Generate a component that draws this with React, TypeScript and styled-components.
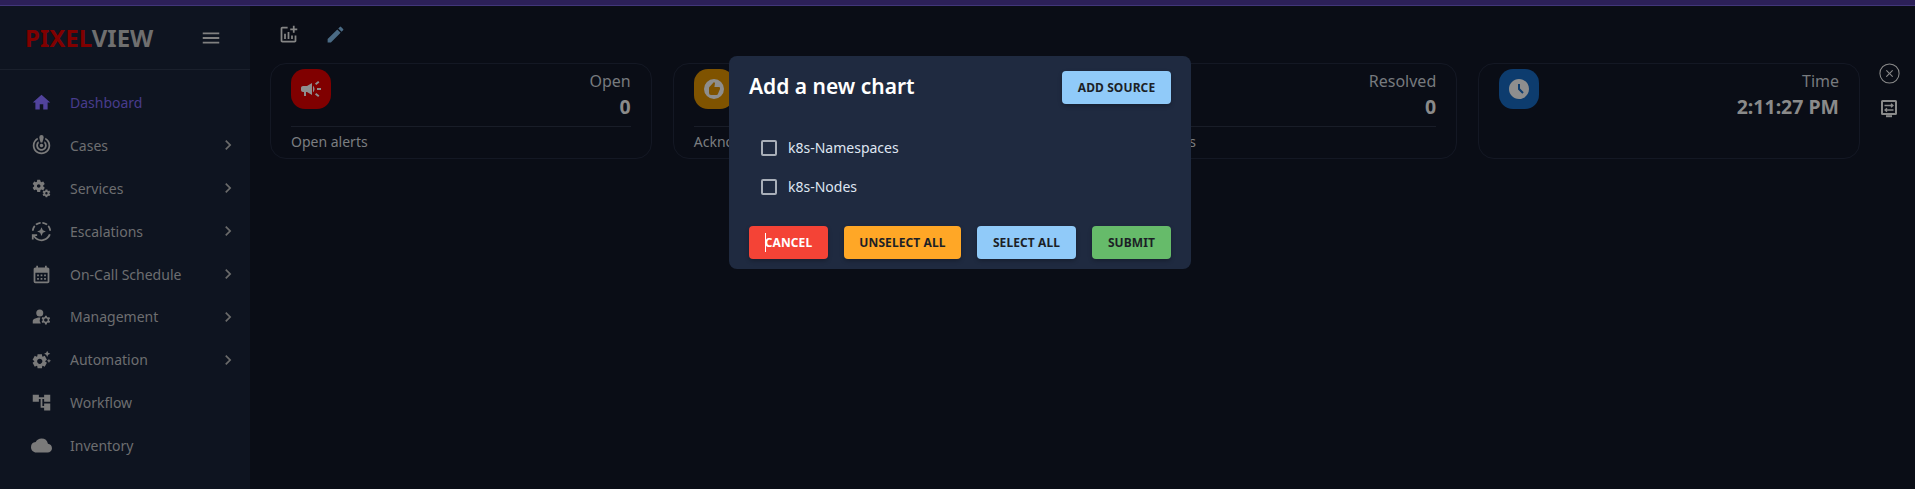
import { ReactNode } from 'react';
import styled, { createGlobalStyle } from 'styled-components';
import { CircleX } from 'lucide-react';
import {
  MdAccessTimeFilled,
  MdAccountTree,
  MdAutoMode,
  MdCalendarMonth,
  MdCampaign,
  MdCheckCircle,
  MdChevronRight,
  MdCloud,
  MdEdit,
  MdHome,
  MdManageAccounts,
  MdMenu,
  MdMiscellaneousServices,
  MdOutlineAddchart,
  MdOutlineCrisisAlert,
  MdRecommend,
  MdSettingsSuggest,
} from 'react-icons/md';

const GlobalStyle = createGlobalStyle`
  html, body {
    margin: 0;
    height: 489px;
    overflow: hidden;
    background: #0a0d16;
    font-family: "Noto Sans", sans-serif;
  }
  * { box-sizing: border-box; }
`;

const TopBar = styled.div`
  height: 6px;
  background: #2c2058;
  border-bottom: 1px solid #41367a;
`;

const Shell = styled.div`
  display: flex;
  height: 483px;
`;

const Sidebar = styled.aside`
  width: 250px;
  flex: none;
  background: #0e1420;
`;

const Brand = styled.div`
  height: 64px;
  padding: 0 28px 0 25px;
  display: flex;
  align-items: center;
  justify-content: space-between;
  border-bottom: 1px solid #1a202c;
  color: #6f6f6f;
  svg { font-size: 22px; color: #808080; }
`;

const Logo = styled.div`
  font-size: 24px;
  font-weight: 700;
  line-height: 1;
  span { color: #800000; }
`;

const NavList = styled.nav`
  padding-top: 11px;
`;

const NavRow = styled.div<{ $active?: boolean }>`
  height: 42.9px;
  padding: 0 12px 0 31px;
  display: flex;
  align-items: center;
  font-size: 14px;
  color: ${(p) => (p.$active ? '#483c8c' : '#6d6e70')};
  > svg:first-child {
    font-size: 21px;
    margin-right: 18px;
    color: ${(p) => (p.$active ? '#51439c' : '#7a7a7a')};
  }
  > span { flex: 1; }
  > svg:last-child:not(:first-child) { font-size: 20px; color: #6a6a6a; }
`;

const Main = styled.main`
  flex: 1;
  padding-left: 20px;
  min-width: 0;
`;

const Toolbar = styled.div`
  height: 57px;
  padding: 18px 0 0 8px;
  display: flex;
  gap: 26px;
  align-items: flex-start;
`;

const ToolIcon = styled.span<{ $color: string }>`
  display: flex;
  color: ${(p) => p.$color};
  font-size: 21px;
`;

const Content = styled.div`
  display: flex;
  align-items: flex-start;
`;

const CardGrid = styled.div`
  width: 1590px;
  display: grid;
  grid-template-columns: repeat(4, 1fr);
  gap: 21px;
`;

const Card = styled.section`
  height: 96px;
  padding: 5px 20px 0;
  border: 1px solid #141824;
  border-radius: 16px;
`;

const CardHead = styled.div<{ $plain?: boolean }>`
  height: 58px;
  border-bottom: 1px solid ${(p) => (p.$plain ? 'transparent' : '#191d28')};
  display: flex;
  justify-content: space-between;
`;

const Badge = styled.div<{ $bg: string }>`
  width: 40px;
  height: 40px;
  border-radius: 14px;
  background: ${(p) => p.$bg};
  color: #8e8e8e;
  display: flex;
  align-items: center;
  justify-content: center;
  font-size: 24px;
`;

const Stat = styled.div`
  text-align: right;
`;

const StatLabel = styled.div`
  font-size: 16px;
  line-height: 24px;
  color: #777a7e;
`;

const StatValue = styled.div`
  font-size: 19.5px;
  line-height: 28px;
  font-weight: 700;
  color: #8a8a8a;
`;

const CardNote = styled.div`
  font-size: 14px;
  line-height: 30px;
  color: #7b7d80;
`;

const Rail = styled.div`
  flex: 1;
  margin-top: -1px;
  padding-left: 3px;
  display: flex;
  flex-direction: column;
  align-items: center;
  gap: 13px;
  color: #8a8a8a;
`;

const RailIcon = styled.span`
  display: flex;
  font-size: 20px;
`;

const Overlay = styled.div`
  position: absolute;
  left: 729px;
  top: 56px;
`;

const Dialog = styled.div`
  width: 462px;
  height: 213px;
  padding: 15px 20px 10px;
  background: #1f2a40;
  border-radius: 8px;
  display: flex;
  flex-direction: column;
`;

const DialogHead = styled.div`
  display: flex;
  justify-content: space-between;
  align-items: center;
  height: 33px;
`;

const DialogTitle = styled.h2`
  margin: 0 0 3px;
  font-size: 21px;
  font-weight: 600;
  color: #fff;
`;

const OptionList = styled.div`
  flex: 1;
  padding: 24px 0 0 12px;
`;

const Option = styled.label`
  height: 39px;
  display: flex;
  align-items: center;
  gap: 11px;
  font-size: 14px;
  color: #dfe6f2;
`;

const CheckBox = styled.span`
  width: 16px;
  height: 16px;
  border: 2px solid #a9afb9;
  border-radius: 2px;
`;

const DialogActions = styled.div`
  display: flex;
  justify-content: space-between;
`;

const ActionButton = styled.button<{ $bg: string; $fg?: string; $w: number }>`
  position: relative;
  width: ${(p) => p.$w}px;
  height: 33px;
  padding: 0;
  border: 0;
  border-radius: 4px;
  background: ${(p) => p.$bg};
  color: ${(p) => p.$fg ?? '#1c1f26'};
  font-family: inherit;
  font-size: 12px;
  font-weight: 700;
  letter-spacing: 0.1px;
  box-shadow: 0 2px 4px rgba(0, 0, 0, 0.25);
`;

const Caret = styled.i`
  position: absolute;
  left: 16px;
  top: 7px;
  width: 1px;
  height: 19px;
  background: #fff;
`;

const MonitorSwap = () => (
  <svg width="1em" height="1em" viewBox="0 0 20 20" fill="none" stroke="currentColor">
    <path strokeWidth="2" d="M3.500 3h13a.5.5 0 0 1 .5.5v12a.5.5 0 0 1-.5.5h-13a.5.5 0 0 1-.5-.5v-12a.5.5 0 0 1 .5-.5z" />
    <path strokeWidth="2" d="M7 18.200h6" />
    <path strokeWidth="1.300" d="M5.500 7.500h8.500m-2-1.800 2 1.800-2 1.800M14.500 12H6m2-1.800L6 12l2 1.800" />
  </svg>
);

const navItems: { label: string; icon: ReactNode; more?: boolean; active?: boolean }[] = [
  { label: 'Dashboard', icon: <MdHome />, active: true },
  { label: 'Cases', icon: <MdOutlineCrisisAlert />, more: true },
  { label: 'Services', icon: <MdMiscellaneousServices />, more: true },
  { label: 'Escalations', icon: <MdAutoMode />, more: true },
  { label: 'On-Call Schedule', icon: <MdCalendarMonth />, more: true },
  { label: 'Management', icon: <MdManageAccounts />, more: true },
  { label: 'Automation', icon: <MdSettingsSuggest />, more: true },
  { label: 'Workflow', icon: <MdAccountTree /> },
  { label: 'Inventory', icon: <MdCloud /> },
];

const cards = [
  { label: 'Open', value: '0', note: 'Open alerts', bg: '#800000', icon: <MdCampaign /> },
  { label: 'Acknowledged', value: '0', note: 'Acknowledged alerts', bg: '#7f5300', icon: <MdRecommend /> },
  { label: 'Resolved', value: '0', note: 'Resolved alerts', bg: '#1b5e20', icon: <MdCheckCircle /> },
  { label: 'Time', value: '2:11:27 PM', note: '', bg: '#0d3c6e', icon: <MdAccessTimeFilled /> },
];

export default function App() {
  return (
    <>
      <GlobalStyle />
      <TopBar />
      <Shell>
        <Sidebar>
          <Brand>
            <Logo>
              <span>PIXEL</span>VIEW
            </Logo>
            <MdMenu />
          </Brand>
          <NavList>
            {navItems.map((item) => (
              <NavRow key={item.label} $active={item.active}>
                {item.icon}
                <span>{item.label}</span>
                {item.more && <MdChevronRight />}
              </NavRow>
            ))}
          </NavList>
        </Sidebar>
        <Main>
          <Toolbar>
            <ToolIcon $color="#858585">
              <MdOutlineAddchart />
            </ToolIcon>
            <ToolIcon $color="#4a6a84">
              <MdEdit />
            </ToolIcon>
          </Toolbar>
          <Content>
            <CardGrid>
              {cards.map((card) => (
                <Card key={card.label}>
                  <CardHead $plain={!card.note}>
                    <Badge $bg={card.bg}>{card.icon}</Badge>
                    <Stat>
                      <StatLabel>{card.label}</StatLabel>
                      <StatValue>{card.value}</StatValue>
                    </Stat>
                  </CardHead>
                  <CardNote>{card.note}</CardNote>
                </Card>
              ))}
            </CardGrid>
            <Rail>
              <RailIcon>
                <CircleX size={23} strokeWidth={1.1} />
              </RailIcon>
              <RailIcon>
                <MonitorSwap />
              </RailIcon>
            </Rail>
          </Content>
        </Main>
      </Shell>
      <Overlay>
        <Dialog>
          <DialogHead>
            <DialogTitle>Add a new chart</DialogTitle>
            <ActionButton $bg="#90caf9" $w={109}>
              ADD SOURCE
            </ActionButton>
          </DialogHead>
          <OptionList>
            <Option>
              <CheckBox />
              k8s-Namespaces
            </Option>
            <Option>
              <CheckBox />
              k8s-Nodes
            </Option>
          </OptionList>
          <DialogActions>
            <ActionButton $bg="#f44336" $fg="#fff" $w={79}>
              <Caret />
              CANCEL
            </ActionButton>
            <ActionButton $bg="#ffa726" $w={117}>
              UNSELECT ALL
            </ActionButton>
            <ActionButton $bg="#90caf9" $w={99}>
              SELECT ALL
            </ActionButton>
            <ActionButton $bg="#66bb6a" $w={79}>
              SUBMIT
            </ActionButton>
          </DialogActions>
        </Dialog>
      </Overlay>
    </>
  );
}
